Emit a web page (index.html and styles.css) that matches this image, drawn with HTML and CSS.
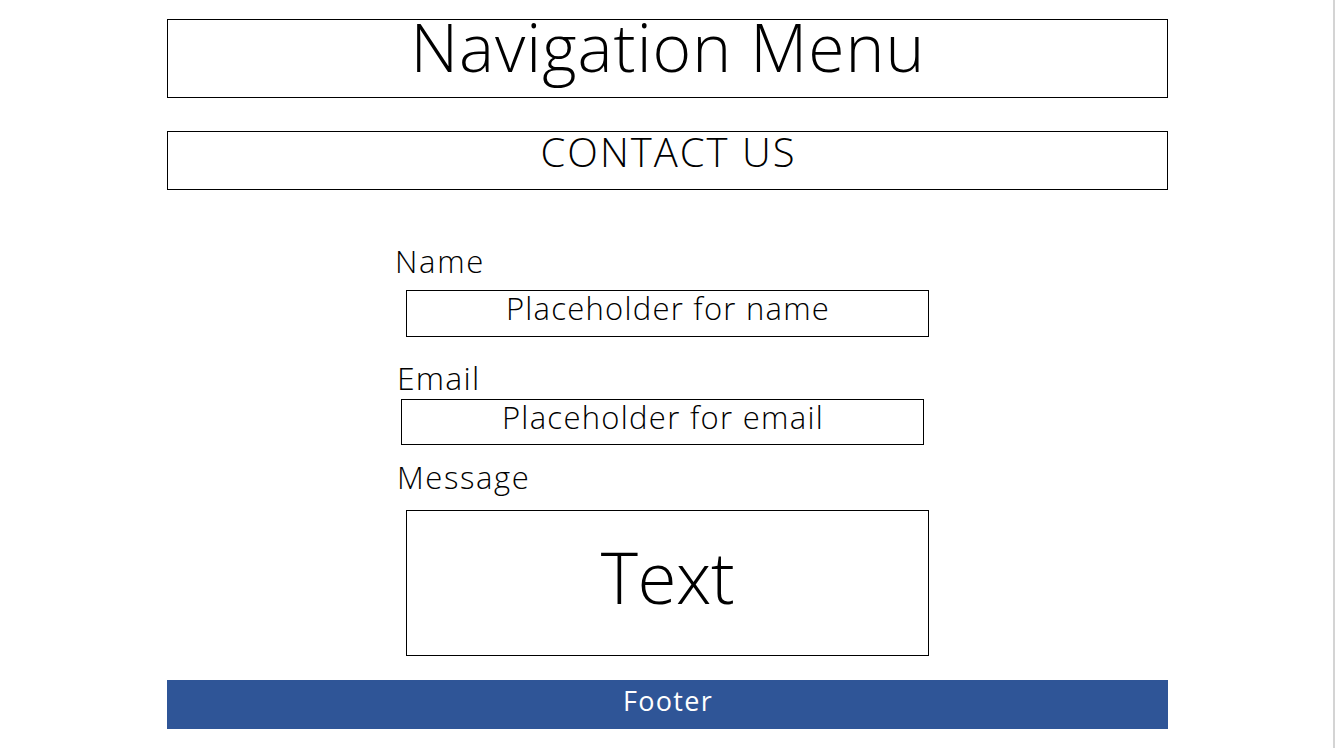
FILE: index.html
```html
<!DOCTYPE html>
<html lang="en">
<head>
<meta charset="utf-8">
<title>Contact Us</title>
<link rel="stylesheet" href="styles.css">
</head>
<body>
<div class="page">
  <div class="frame">
    <header class="nav">Navigation Menu</header>
    <h1 class="title">CONTACT US</h1>
    <form class="form">
      <div class="label label-name">Name</div>
      <div class="field field-name">Placeholder for name</div>
      <div class="label label-email">Email</div>
      <div class="field field-email">Placeholder for email</div>
      <div class="label label-message">Message</div>
      <div class="message">Text</div>
    </form>
    <footer class="footer">Footer</footer>
  </div>
</div>
</body>
</html>
```

FILE: styles.css
```css
* { box-sizing: border-box; }
html, body { margin: 0; padding: 0; background: #fff; }
body {
  font-family: "Open Sans", "Lato", "Liberation Sans", sans-serif;
  color: #000;
  font-variant-ligatures: none;
}
.page {
  width: 1335px;
  height: 748px;
  border-right: 2px solid #d4d4d4;
  padding-top: 19px;
  padding-left: 167px;
  overflow: hidden;
}
.frame {
  width: 1001px;
  display: flex;
  flex-direction: column;
}
.nav {
  height: 79px;
  border: 1px solid #000;
  padding-left: 1px;
  text-align: center;
  font-size: 66px;
  font-weight: 300;
  letter-spacing: 1px;
  line-height: 53px;
  white-space: nowrap;
}
.title {
  margin: 33px 0 0;
  height: 59px;
  border: 1px solid #000;
  padding-left: 2px;
  text-align: center;
  font-size: 40px;
  font-weight: 300;
  letter-spacing: 2px;
  line-height: 39px;
}
.form {
  margin: 0 0 0 227px;
  display: flex;
  flex-direction: column;
  align-items: flex-start;
}
.label {
  font-size: 31px;
  font-weight: 300;
  line-height: 40px;
  height: 40px;
}
.label-name { margin-top: 51px; margin-left: 1px; letter-spacing: 1.7px; }
.label-email { margin-top: 21px; margin-left: 3px; font-size: 32px; letter-spacing: 1.2px; }
.label-message { margin-top: 12px; margin-left: 3px; letter-spacing: 1.6px; }
.field {
  width: 523px;
  border: 1px solid #000;
  padding-left: 1px;
  text-align: center;
  font-size: 31px;
  font-weight: 300;
  letter-spacing: 1.25px;
  line-height: 34px;
}
.field-name { margin-top: 9px; margin-left: 12px; height: 47px; }
.field-email { margin-top: 1px; margin-left: 7px; height: 46px; letter-spacing: 1.3px; }
.message {
  margin-top: 13px;
  margin-left: 12px;
  width: 523px;
  height: 146px;
  border: 1px solid #000;
  text-align: center;
  font-size: 71px;
  font-weight: 300;
  letter-spacing: -0.5px;
  line-height: 131px;
}
.footer {
  margin-top: 24px;
  height: 49px;
  background: #2f5597;
  color: #fff;
  padding-left: 1px;
  text-align: center;
  font-size: 27px;
  font-weight: 400;
  letter-spacing: 1.3px;
  line-height: 42px;
}
```
